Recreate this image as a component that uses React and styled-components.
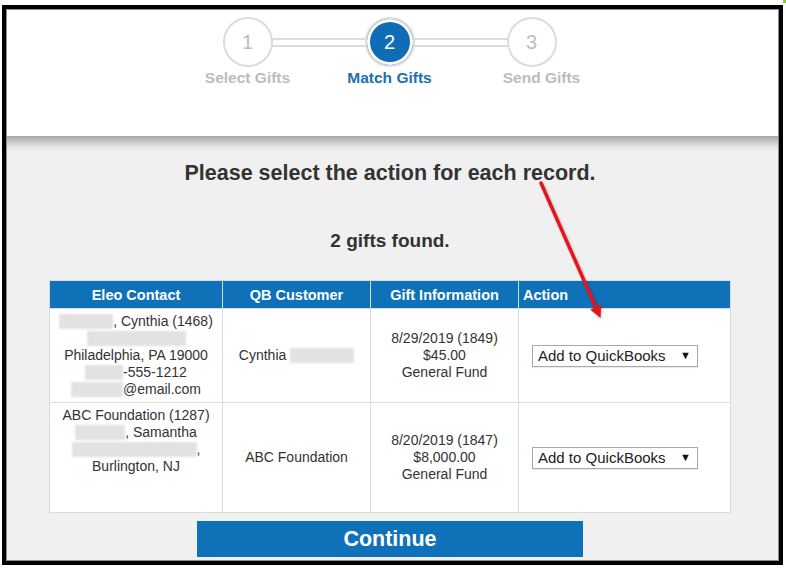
import React from "react"
import styled, { createGlobalStyle } from "styled-components"

const GlobalStyle = createGlobalStyle`
	html, body {
		margin: 0;
		padding: 0;
		background: #fff;
	}
	body {
		font-family: "Liberation Sans", Arial, sans-serif;
		color: #333;
	}
`

const steps = [
	{ n: 1, label: "Select Gifts", shift: 0 },
	{ n: 2, label: "Match Gifts", shift: 0, active: true },
	{ n: 3, label: "Send Gifts", shift: 10 },
]

function Redacted({ w }) {
	return <Redact $w={w} />
}

function MatchGifts() {
	return (
		<Page>
			<GlobalStyle />
			<Corner />
			<Frame>
				<Inner>
					<Header>
						<Stepper>
							{steps.map((s, i) => (
								<Step key={s.n}>
									<Track>
										<Connector $hidden={i === 0} />
										<Circle $active={s.active}>{s.n}</Circle>
										<Connector $hidden={i === steps.length - 1} />
									</Track>
									<StepLabel $active={s.active} $shift={s.shift}>
										{s.label}
									</StepLabel>
								</Step>
							))}
						</Stepper>
					</Header>

					<Main>
						<Title>Please select the action for each record.</Title>
						<Count>2 gifts found.</Count>

						<Table>
							<colgroup>
								<col style={{ width: 173 }} />
								<col style={{ width: 148 }} />
								<col style={{ width: 148 }} />
								<col style={{ width: 212 }} />
							</colgroup>
							<thead>
								<tr>
									<Th>Eleo Contact</Th>
									<Th>QB Customer</Th>
									<Th>Gift Information</Th>
									<Th $left>Action</Th>
								</tr>
							</thead>
							<tbody>
								<Row $h={93}>
									<ContactCell>
										<Redacted w={54} />, Cynthia (1468)
										<br />
										<Redacted w={99} />
										<br />
										Philadelphia, PA 19000
										<br />
										<Redacted w={38} />-555-1212
										<br />
										<Redacted w={52} />@email.com
									</ContactCell>
									<Td>
										Cynthia <Redacted w={64} />
									</Td>
									<Td>
										8/29/2019 (1849)
										<br />
										$45.00
										<br />
										General Fund
									</Td>
									<ActionCell>
										<FakeSelect>
											Add to QuickBooks <Caret>▼</Caret>
										</FakeSelect>
									</ActionCell>
								</Row>
								<Row $h={110}>
									<ContactCell>
										ABC Foundation (1287)
										<br />
										<Redacted w={50} />, Samantha
										<br />
										<Redacted w={125} />,
										<br />
										Burlington, NJ
									</ContactCell>
									<Td>ABC Foundation</Td>
									<Td>
										8/20/2019 (1847)
										<br />
										$8,000.00
										<br />
										General Fund
									</Td>
									<ActionCell>
										<FakeSelect>
											Add to QuickBooks <Caret>▼</Caret>
										</FakeSelect>
									</ActionCell>
								</Row>
							</tbody>
						</Table>

						<ContinueButton type="button">Continue</ContinueButton>
					</Main>
				</Inner>

				<Arrow width="90" height="160" viewBox="0 0 90 160">
					<line
						x1="10"
						y1="9"
						x2="64.7"
						y2="133"
						stroke="#e8141c"
						strokeWidth="3.5"
						strokeLinecap="round"
					/>
					<polygon points="69.5,144 59.2,135.4 70.2,130.6" fill="#e8141c" />
				</Arrow>
			</Frame>
		</Page>
	)
}

const Page = styled.div`
	position: relative;
	width: 786px;
	height: 568px;
	padding: 5px 0 0 2px;
	box-sizing: border-box;
`

const Corner = styled.div`
	position: absolute;
	top: 0;
	left: 783px;
	width: 3px;
	height: 3px;
	background: #8cc63f;
`

const Frame = styled.div`
	position: relative;
	width: 781px;
	height: 560px;
	box-sizing: border-box;
	border: 4px solid #000;
	overflow: hidden;
	display: flex;
`

const Inner = styled.div`
	flex: 1;
	display: flex;
	flex-direction: column;
	border: 1px solid #8c8c8c;
	background: #f0f0f0;
	overflow: hidden;
`

const Header = styled.div`
	height: 126px;
	flex-shrink: 0;
	background: #fff;
	display: flex;
	justify-content: center;
	padding: 7px 6px 0 0;
	box-sizing: border-box;
`

const Stepper = styled.div`
	display: flex;
`

const Step = styled.div`
	width: 142px;
	display: flex;
	flex-direction: column;
	align-items: center;
`

const Track = styled.div`
	display: flex;
	align-items: center;
	width: 100%;
`

const Connector = styled.div`
	flex: 1;
	height: 9px;
	box-sizing: border-box;
	border-top: 2px solid #dcdcdc;
	border-bottom: 2px solid #dcdcdc;
	background: #fff;
	margin: 0 -1px;
	visibility: ${(p) => (p.$hidden ? "hidden" : "visible")};
`

const Circle = styled.div`
	width: 50px;
	height: 50px;
	flex-shrink: 0;
	box-sizing: border-box;
	border-radius: 50%;
	border: 2px solid #dcdcdc;
	display: flex;
	align-items: center;
	justify-content: center;
	font-size: 20px;
	position: relative;
	z-index: 1;
	background: ${(p) => (p.$active ? "#0f6db5" : "#fff")};
	color: ${(p) => (p.$active ? "#fff" : "#bdbdbd")};
	box-shadow: ${(p) => (p.$active ? "inset 0 0 0 3px #fff" : "none")};
`

const StepLabel = styled.div`
	margin-top: 2px;
	margin-left: ${(p) => p.$shift * 2}px;
	font-size: 15.5px;
	font-weight: bold;
	line-height: 18px;
	color: ${(p) => (p.$active ? "#1b6fb3" : "#bcbcbc")};
`

const Main = styled.div`
	flex: 1;
	display: flex;
	flex-direction: column;
	align-items: center;
	padding-right: 5px;
	background: linear-gradient(#a6a6a6, #e6e6e6 11px, #f0f0f0 15px);
`

const Title = styled.h2`
	margin: 25px 0 0;
	font-size: 21.5px;
	line-height: 25px;
	font-weight: bold;
	color: #333;
`

const Count = styled.div`
	margin-top: 44px;
	font-size: 19px;
	line-height: 22px;
	font-weight: bold;
	color: #333;
`

const Table = styled.table`
	margin-top: 28px;
	width: 681px;
	table-layout: fixed;
	border-collapse: collapse;
	background: #fff;
	border: 1px solid #d6d6d6;
`

const Th = styled.th`
	height: 27px;
	padding: 0 4px;
	background: #0f71b8;
	color: #fff;
	font-size: 14.5px;
	font-weight: bold;
	border: 1px solid #d0dbe6;
	text-align: ${(p) => (p.$left ? "left" : "center")};
`

const Row = styled.tr`
	height: ${(p) => p.$h}px;
`

const Td = styled.td`
	padding: 4px 6px;
	font-size: 14px;
	line-height: 17px;
	color: #333;
	text-align: center;
	vertical-align: middle;
	border: 1px solid #dcdcdc;
`

const ContactCell = styled(Td)`
	vertical-align: top;
	padding-top: 4px;
	white-space: nowrap;
`

const ActionCell = styled(Td)`
	text-align: left;
	padding-left: 13px;
`

const Redact = styled.span`
	display: inline-block;
	width: ${(p) => p.$w}px;
	height: 15px;
	background: #e2e2e2;
	filter: blur(1px);
	vertical-align: -3px;
`

const FakeSelect = styled.div`
	display: flex;
	align-items: center;
	justify-content: space-between;
	width: 166px;
	height: 22px;
	box-sizing: border-box;
	padding: 0 6px 0 5px;
	border: 1px solid #a9a9a9;
	background: #fff;
	font-size: 15px;
	color: #222;
	box-shadow: 0 1px 1px rgba(0, 0, 0, 0.08);
`

const Caret = styled.span`
	font-size: 11px;
	color: #111;
`

const ContinueButton = styled.button`
	margin-top: 8px;
	width: 386px;
	height: 36px;
	flex-shrink: 0;
	border: none;
	background: #0f71b8;
	color: #fff;
	font-family: "Liberation Sans", Arial, sans-serif;
	font-size: 21.5px;
	font-weight: bold;
	cursor: pointer;
`

const Arrow = styled.svg`
	position: absolute;
	left: 525px;
	top: 165px;
	pointer-events: none;
	filter: drop-shadow(1px 1px 1px rgba(0, 0, 0, 0.25));
`

export default MatchGifts
